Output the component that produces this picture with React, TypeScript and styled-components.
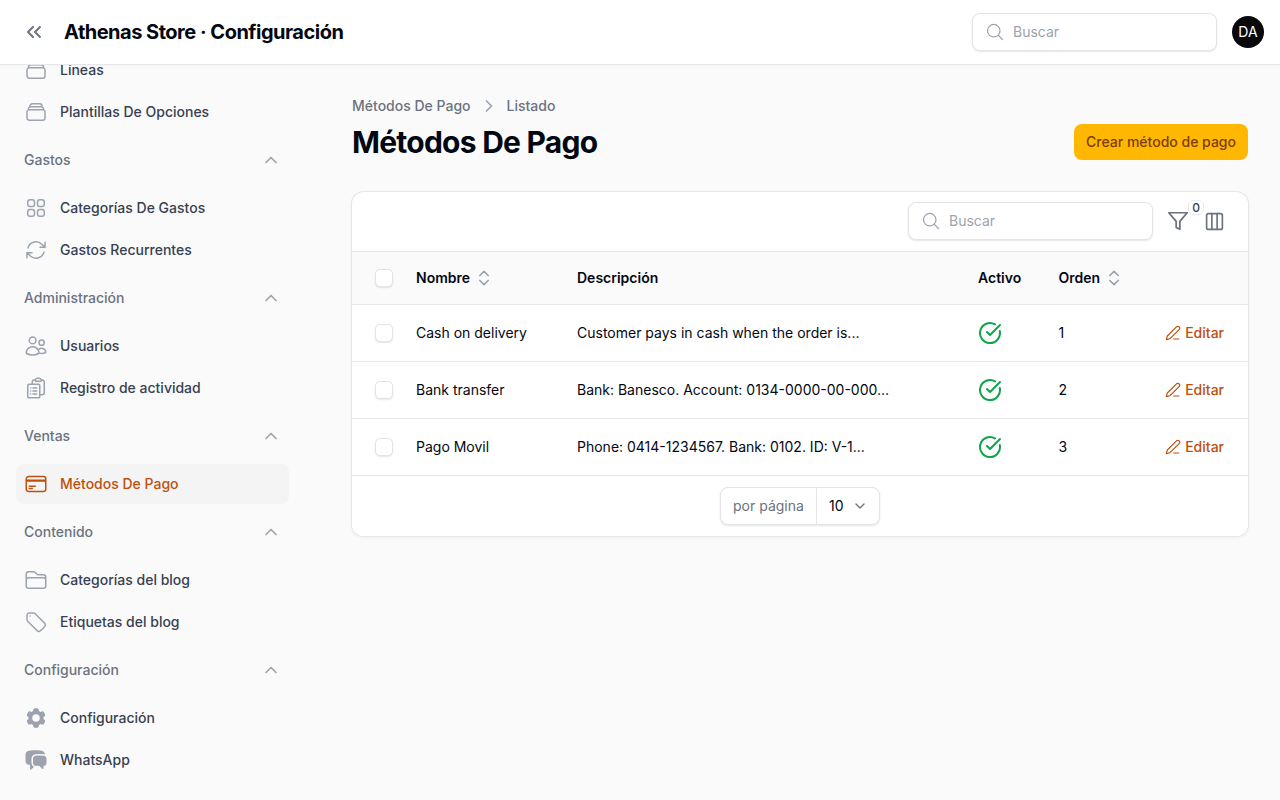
import React from "react";
import styled, { createGlobalStyle } from "styled-components";
import {
  ChevronDown,
  ChevronRight,
  ChevronUp,
  ChevronsLeft,
  ChevronsUpDown,
  CircleCheckBig,
  Columns3,
  PenLine,
} from "lucide-react";
import {
  HiChatBubbleLeftRight,
  HiCog6Tooth,
  HiOutlineArrowPath,
  HiOutlineClipboardDocumentList,
  HiOutlineCreditCard,
  HiOutlineFolder,
  HiOutlineMagnifyingGlass,
  HiOutlineRectangleStack,
  HiOutlineSquares2X2,
  HiOutlineTag,
  HiOutlineUsers,
} from "react-icons/hi2";

const PRIMARY = "#bf4f0c";

const GlobalStyle = createGlobalStyle`
  * { box-sizing: border-box; }
  html, body { margin: 0; height: 100%; }
  body {
    background: #fafafa;
    color: #030712;
    font-family: Inter, "Liberation Sans", sans-serif;
    font-size: 14px;
    line-height: 20px;
    overflow: hidden;
  }
`;

const navGroups = [
  {
    label: null,
    items: [
      { label: "Líneas", icon: HiOutlineRectangleStack },
      { label: "Plantillas De Opciones", icon: HiOutlineRectangleStack },
    ],
  },
  {
    label: "Gastos",
    items: [
      { label: "Categorías De Gastos", icon: HiOutlineSquares2X2 },
      { label: "Gastos Recurrentes", icon: HiOutlineArrowPath },
    ],
  },
  {
    label: "Administración",
    items: [
      { label: "Usuarios", icon: HiOutlineUsers },
      { label: "Registro de actividad", icon: HiOutlineClipboardDocumentList },
    ],
  },
  {
    label: "Ventas",
    items: [{ label: "Métodos De Pago", icon: HiOutlineCreditCard, active: true }],
  },
  {
    label: "Contenido",
    items: [
      { label: "Categorías del blog", icon: HiOutlineFolder },
      { label: "Etiquetas del blog", icon: HiOutlineTag },
    ],
  },
  {
    label: "Configuración",
    items: [
      { label: "Configuración", icon: HiCog6Tooth },
      { label: "WhatsApp", icon: HiChatBubbleLeftRight },
    ],
  },
];

const rows = [
  { name: "Cash on delivery", description: "Customer pays in cash when the order is...", order: 1 },
  { name: "Bank transfer", description: "Bank: Banesco. Account: 0134-0000-00-000...", order: 2 },
  { name: "Pago Movil", description: "Phone: 0414-1234567. Bank: 0102. ID: V-1...", order: 3 },
];

const SearchField = () => (
  <SearchBox>
    <HiOutlineMagnifyingGlass size={20} />
    <SearchInput placeholder="Buscar" />
  </SearchBox>
);

const FunnelIcon = () => (
  <svg width="22" height="22" viewBox="0 0 24 24" fill="none" stroke="currentColor" strokeWidth="1.9" strokeLinejoin="round">
    <polygon points="22 3 2 3 10 12.46 10 19 14 21 14 12.46" />
  </svg>
);

const App = () => {
  return (
    <>
      <GlobalStyle />
      <Page>
        <Topbar>
          <TopbarLeft>
            <CollapseButton>
              <ChevronsLeft size={24} strokeWidth={2} />
            </CollapseButton>
            <BrandTitle>Athenas Store · Configuración</BrandTitle>
          </TopbarLeft>
          <TopbarRight>
            <SearchField />
            <Avatar>DA</Avatar>
          </TopbarRight>
        </Topbar>
        <Body>
          <Sidebar>
            <Nav>
              {navGroups.map((group, i) => (
                <NavGroup key={i}>
                  {group.label && (
                    <GroupLabel>
                      {group.label}
                      <ChevronUp size={20} strokeWidth={2} />
                    </GroupLabel>
                  )}
                  <NavItems>
                    {group.items.map((item) => (
                      <NavItem key={item.label} $active={item.active}>
                        <item.icon size={24} />
                        {item.label}
                      </NavItem>
                    ))}
                  </NavItems>
                </NavGroup>
              ))}
            </Nav>
          </Sidebar>
          <Main>
            <Breadcrumbs>
              Métodos De Pago
              <ChevronRight size={20} strokeWidth={2} />
              Listado
            </Breadcrumbs>
            <Heading>
              <PageTitle>Métodos De Pago</PageTitle>
              <PrimaryButton>Crear método de pago</PrimaryButton>
            </Heading>
            <Card>
              <Toolbar>
                <SearchField />
                <ToolbarIcon>
                  <FunnelIcon />
                  <CountBadge>0</CountBadge>
                </ToolbarIcon>
                <ToolbarIcon>
                  <Columns3 size={21} strokeWidth={1.9} />
                </ToolbarIcon>
              </Toolbar>
              <Table>
                <colgroup>
                  <col width={52} />
                  <col width={161} />
                  <col width={401} />
                  <col style={{ width: 80.5 }} />
                  <col width={100} />
                  <col />
                </colgroup>
                <thead>
                  <tr>
                    <HeadCell $first>
                      <Checkbox />
                    </HeadCell>
                    <HeadCell>
                      <SortLabel>
                        Nombre
                        <ChevronsUpDown size={20} strokeWidth={2} />
                      </SortLabel>
                    </HeadCell>
                    <HeadCell>Descripción</HeadCell>
                    <HeadCell>Activo</HeadCell>
                    <HeadCell>
                      <SortLabel>
                        Orden
                        <ChevronsUpDown size={20} strokeWidth={2} />
                      </SortLabel>
                    </HeadCell>
                    <HeadCell />
                  </tr>
                </thead>
                <tbody>
                  {rows.map((row) => (
                    <tr key={row.name}>
                      <Cell $first>
                        <Checkbox />
                      </Cell>
                      <Cell>{row.name}</Cell>
                      <Cell>{row.description}</Cell>
                      <Cell>
                        <StatusIcon>
                          <CircleCheckBig size={24} strokeWidth={2} />
                        </StatusIcon>
                      </Cell>
                      <Cell>{row.order}</Cell>
                      <ActionCell>
                        <EditLink>
                          <PenLine size={16} strokeWidth={1.75} />
                          Editar
                        </EditLink>
                      </ActionCell>
                    </tr>
                  ))}
                </tbody>
              </Table>
              <CardFooter>
                <PerPage>
                  <PerPageLabel>por página</PerPageLabel>
                  <PerPageValue>
                    10
                    <ChevronDown size={16} strokeWidth={2} />
                  </PerPageValue>
                </PerPage>
              </CardFooter>
            </Card>
          </Main>
        </Body>
      </Page>
    </>
  );
};

const Page = styled.div`
  display: flex;
  flex-direction: column;
  height: 100vh;
`;

const Topbar = styled.header`
  flex: none;
  display: flex;
  align-items: center;
  justify-content: space-between;
  height: 65px;
  padding: 0 16px 0 22px;
  background: #fff;
  border-bottom: 1px solid #e5e7eb;
  box-shadow: 0 1px 2px rgba(0, 0, 0, 0.03);
  position: relative;
  z-index: 2;
`;

const TopbarLeft = styled.div`
  display: flex;
  align-items: center;
  gap: 18px;
`;

const CollapseButton = styled.span`
  display: flex;
  color: #6b7280;
`;

const BrandTitle = styled.div`
  font-size: 20px;
  line-height: 28px;
  font-weight: 700;
  letter-spacing: -0.5px;
  color: #030712;
`;

const TopbarRight = styled.div`
  display: flex;
  align-items: center;
  gap: 15px;
`;

const SearchBox = styled.label`
  display: flex;
  align-items: center;
  gap: 8px;
  width: 245px;
  height: 38px;
  padding: 0 12px;
  background: #fff;
  border: 1px solid #e3e4e7;
  border-radius: 8px;
  box-shadow: 0 1px 2px rgba(0, 0, 0, 0.1);
  color: #9ca3af;
`;

const SearchInput = styled.input`
  flex: 1;
  min-width: 0;
  padding: 0;
  border: 0;
  outline: 0;
  background: transparent;
  font: 400 14px/20px Inter, "Liberation Sans", sans-serif;

  &::placeholder {
    color: #9ca3af;
    opacity: 1;
  }
`;

const Avatar = styled.div`
  display: flex;
  align-items: center;
  justify-content: center;
  width: 32px;
  height: 32px;
  border-radius: 50%;
  background: #09090b;
  color: #fff;
  font-size: 14px;
`;

const Body = styled.div`
  flex: 1;
  display: flex;
  min-height: 0;
`;

const Sidebar = styled.aside`
  flex: none;
  width: 320px;
  overflow: hidden;
`;

const Nav = styled.nav`
  display: flex;
  flex-direction: column;
  gap: 10px;
  margin-top: -15px;
  padding: 0 31px 0 16px;
`;

const NavGroup = styled.div`
  display: flex;
  flex-direction: column;
  gap: 10px;
`;

const GroupLabel = styled.div`
  display: flex;
  align-items: center;
  justify-content: space-between;
  height: 36px;
  padding: 0 8px;
  color: #6b7280;
  font-weight: 500;

  svg {
    color: #9ca3af;
  }
`;

const NavItems = styled.div`
  display: flex;
  flex-direction: column;
  gap: 2px;
`;

const NavItem = styled.a<{ $active?: boolean }>`
  display: flex;
  align-items: center;
  gap: 12px;
  height: 40px;
  padding: 0 8px;
  border-radius: 8px;
  font-weight: 500;
  color: ${(props) => (props.$active ? PRIMARY : "#374151")};
  background: ${(props) => (props.$active ? "#f4f4f5" : "transparent")};

  svg {
    flex: none;
    color: ${(props) => (props.$active ? PRIMARY : "#9ca3af")};
  }
`;

const Main = styled.main`
  flex: 1;
  min-width: 0;
  padding: 31px 32px 0;
`;

const Breadcrumbs = styled.div`
  display: flex;
  align-items: center;
  gap: 8px;
  height: 20px;
  color: #6b7280;
  font-weight: 500;

  svg {
    color: #9ca3af;
  }
`;

const Heading = styled.div`
  display: flex;
  align-items: center;
  justify-content: space-between;
  height: 36px;
  margin-top: 8px;
  margin-bottom: 32px;
`;

const PageTitle = styled.h1`
  margin: 0;
  font-size: 30px;
  line-height: 36px;
  font-weight: 700;
  letter-spacing: -0.75px;
  color: #030712;
`;

const PrimaryButton = styled.button`
  height: 36px;
  padding: 0 12px;
  border: 0;
  border-radius: 8px;
  background: #ffb700;
  color: #7c3d0a;
  font: 500 14px/20px Inter, "Liberation Sans", sans-serif;
`;

const Card = styled.section`
  background: #fff;
  border-radius: 12px;
  box-shadow: 0 0 0 1px #e5e7eb, 0 1px 3px 1px rgba(0, 0, 0, 0.05);
  overflow: hidden;
`;

const Toolbar = styled.div`
  display: flex;
  align-items: center;
  justify-content: flex-end;
  gap: 12px;
  height: 59px;
  padding: 0 22px 1px 0;

  ${SearchBox} {
    margin-right: 1px;
  }
`;

const ToolbarIcon = styled.span`
  position: relative;
  display: flex;
  align-items: center;
  justify-content: center;
  width: 24px;
  height: 24px;
  color: #6b7280;
`;

const CountBadge = styled.span`
  position: absolute;
  top: -9px;
  left: 22px;
  display: flex;
  align-items: center;
  justify-content: center;
  width: 16px;
  height: 15px;
  border: 1px solid #ebecef;
  border-radius: 5px;
  background: #fff;
  color: #374151;
  font-size: 12px;
  line-height: 14px;
  font-weight: 500;
`;

const Table = styled.table`
  width: 100%;
  table-layout: fixed;
  border-collapse: collapse;
`;

const HeadCell = styled.th<{ $first?: boolean }>`
  height: 53px;
  padding: 0 ${(props) => (props.$first ? "0 0 23px" : "12px")};
  background: #fafafa;
  border-top: 1px solid #e5e7eb;
  text-align: left;
  font-weight: 600;
  color: #030712;
`;

const Cell = styled.td<{ $first?: boolean }>`
  height: 57px;
  padding: 0 ${(props) => (props.$first ? "0 0 23px" : "12px")};
  border-top: 1px solid #e5e7eb;
  white-space: nowrap;
  color: #030712;
`;

const ActionCell = styled(Cell)`
  padding: 0 24px 0 0;
`;

const Checkbox = styled.span`
  display: block;
  width: 18px;
  height: 18px;
  background: #fff;
  border: 1px solid #e3e4e7;
  border-radius: 5px;
  box-shadow: 0 1px 2px rgba(0, 0, 0, 0.1);
`;

const SortLabel = styled.span`
  display: flex;
  align-items: center;
  gap: 4px;

  svg {
    color: #9ca3af;
  }
`;

const StatusIcon = styled.span`
  display: flex;
  color: #10a44b;
`;

const EditLink = styled.a`
  display: flex;
  align-items: center;
  justify-content: flex-end;
  gap: 4px;
  color: ${PRIMARY};
  font-weight: 500;
`;

const CardFooter = styled.div`
  display: flex;
  align-items: center;
  justify-content: center;
  height: 61px;
  margin-top: -1px;
  border-top: 1px solid #e5e7eb;
  background: #fff;
  position: relative;
`;

const PerPage = styled.div`
  display: flex;
  width: 160px;
  height: 38px;
  background: #fff;
  border: 1px solid #e3e4e7;
  border-radius: 8px;
  box-shadow: 0 1px 2px rgba(0, 0, 0, 0.1);
`;

const PerPageLabel = styled.span`
  display: flex;
  align-items: center;
  width: 96px;
  padding-left: 12px;
  border-right: 1px solid #e5e7eb;
  color: #6b7280;
`;

const PerPageValue = styled.span`
  flex: 1;
  display: flex;
  align-items: center;
  justify-content: space-between;
  padding: 0 11px 0 12px;
  color: #030712;

  svg {
    color: #6b7280;
  }
`;

export default App;
